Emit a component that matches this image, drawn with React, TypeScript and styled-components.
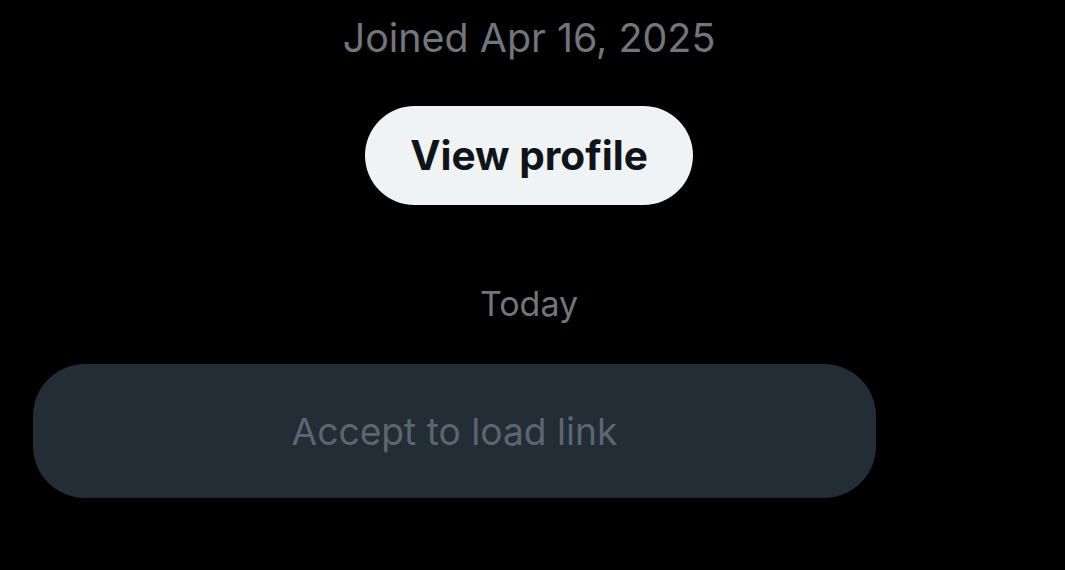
import React from 'react';
import styled, {createGlobalStyle} from 'styled-components';

const GlobalStyle = createGlobalStyle`
    html, body {
        margin: 0;
        padding: 0;
        background: #000000;
    }
    body {
        font-family: Inter, "Noto Sans", "Liberation Sans", sans-serif;
        -webkit-font-smoothing: antialiased;
    }
`;

const Page = styled.div`
    width: 1065px;
    height: 570px;
    overflow: hidden;
    display: flex;
    flex-direction: column;
    padding: 0 33px;
    box-sizing: border-box;
`;

const Header = styled.div`
    display: flex;
    flex-direction: column;
    align-items: center;
    padding-right: 7px;
`;

const Joined = styled.div`
    margin-top: 12px;
    font-size: 39.4px;
    line-height: 52px;
    color: #71767b;
`;

const ProfileButton = styled.button`
    margin-top: 42px;
    height: 99px;
    padding: 0 45px;
    border: none;
    border-radius: 999px;
    background: #eff3f4;
    color: #0f1419;
    font-family: inherit;
    font-size: 40.6px;
    font-weight: 700;
    cursor: pointer;
`;

const DayLabel = styled.div`
    margin-top: 77px;
    font-size: 34px;
    line-height: 44px;
    color: #71767b;
`;

const LinkPill = styled.div`
    margin-top: 38px;
    width: 843px;
    height: 134px;
    border-radius: 52px;
    background: #232d35;
    display: flex;
    align-items: center;
    justify-content: center;
    color: #5b6670;
    font-size: 37.2px;
`;

export default function App() {
    return (
        <>
            <GlobalStyle />
            <Page>
                <Header>
                    <Joined>Joined Apr 16, 2025</Joined>
                    <ProfileButton>View profile</ProfileButton>
                    <DayLabel>Today</DayLabel>
                </Header>
                <LinkPill>Accept to load link</LinkPill>
            </Page>
        </>
    );
}
